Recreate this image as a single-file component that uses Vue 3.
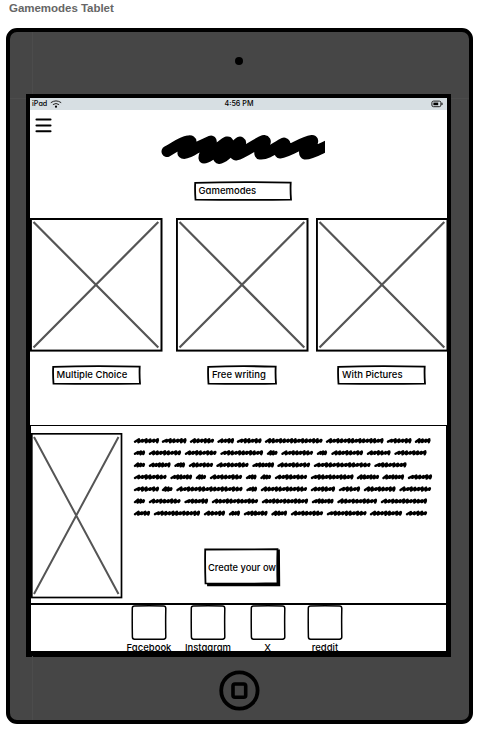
<script setup>
const modes = [
  { name: 'Multiple Choice', w: 89, cls: 'multiple' },
  { name: 'Free writing', w: 70, cls: 'writing' },
  { name: 'With Pictures', w: 89, cls: 'pictures' },
]

const socials = [
  { name: 'Facebook', cls: 'facebook' },
  { name: 'Instagram', cls: 'instagram' },
  { name: 'X', cls: 'x' },
  { name: 'reddit', cls: 'reddit' },
]

// Start and end of every scribbled word, one list per line.
const lines = [
  [[1, 26], [29, 53.5], [57, 81], [84.5, 101], [104, 128.5], [132, 189.5], [193, 250.5], [254, 278.5], [282, 297.5]],
  [[1, 12], [16, 48], [52, 83.5], [87.5, 130], [134, 144.5], [148.5, 180], [184, 194], [198.5, 230], [234, 257.5], [261.5, 293.5]],
  [[1, 12], [16, 37.5], [41.5, 52], [56, 80], [83.5, 115.5], [119.5, 141], [144.5, 177], [181, 237.5], [241.5, 273.5]],
  [[1, 33.5], [37.5, 59], [63, 73], [77, 109], [113, 123.5], [127.5, 138], [142, 174], [178, 220.5], [224, 246], [249.5, 271], [275, 299]],
  [[1, 26], [29, 39.5], [43.5, 109.5], [113.5, 124], [128, 174], [178, 202], [206, 227], [231, 262.5], [266.5, 298]],
  [[1, 12], [16, 47.5], [51.5, 75], [79, 125], [129, 175], [179, 200.5], [204.5, 244], [248, 294]],
  [[1, 17], [21, 67], [71, 92], [96, 107], [111, 134.5], [138.5, 154], [158, 190], [194, 233.5], [237, 269], [273, 294]],
]

const rises = [1.5, 0.9, 1.5, 1.3, 1.0, 1.6]

function wordPath([start, end], y, seed) {
  const count = Math.max(3, Math.round((end - start) / 3.9))
  const step = (end - start - 2.4) / count
  let x = start + 1
  let d = `M${x} ${y + 0.9}`
  for (let i = 0; i < count; i++) {
    const r = rises[(i + seed) % rises.length]
    d += `L${(x + step * 1.05).toFixed(1)} ${(y - r).toFixed(1)}`
    x += step
    d += `L${(x - step * 0.1).toFixed(1)} ${(y + r * 0.9).toFixed(1)}`
  }
  return d + `L${(end - 1.1).toFixed(1)} ${y - 0.4}`
}

const scribble = lines
  .map((words, row) => words.map((w, i) => wordPath(w, 4.8 + row * 12.08, row + i)).join(''))
  .join('')

function labelFrame(w) {
  return `M1.2 1.8Q${w * 0.45} .7 ${w - 1.3} 1.6Q${w - 1.7} 10 ${w - 1} 18.6Q${w / 2} 19.3 1.5 18.6Q.8 9 1.2 1.8Z`
}
</script>

<template>
  <main class="page">
    <h1 class="title">Gamemodes Tablet</h1>
    <div class="device">
      <i class="seam seam-top"></i>
      <i class="seam seam-bottom"></i>
      <i class="seam seam-left"></i>
      <i class="seam seam-right"></i>
      <span class="camera"></span>
      <div class="screen">
        <div class="status">
          <span class="carrier">iPad
            <svg width="12" height="8" viewBox="0 0 12 8">
              <path d="M.8 2.7Q6-.9 11.2 2.7M2.9 4.6Q6 2.4 9.1 4.6" fill="none" stroke="#222" stroke-width="1" />
              <circle cx="6" cy="6.7" r="1.1" />
            </svg>
          </span>
          <span class="clock">4:56 PM</span>
          <svg class="battery" width="12" height="8" viewBox="0 0 12 8">
            <rect x=".9" y="1.1" width="9" height="5.6" rx="1.6" fill="none" stroke="#222" />
            <rect x="2.4" y="2.6" width="4.8" height="2.6" />
            <path d="M11 2.8v2.2" stroke="#222" stroke-width="1.2" />
          </svg>
        </div>

        <header class="header">
          <svg class="menu" width="18" height="16" viewBox="0 0 18 16">
            <path d="M1.500 2.500h14M1.500 8.500h14M1.500 14.300h14" stroke="#000" stroke-width="2.100" stroke-linecap="round" />
          </svg>
          <svg class="logo" width="164" height="34" viewBox="0 0 164 34">
            <path
              d="M6 18.500C13 15 20 9 27 8C35 6 24 16 22 20C24 22 32 17 37 14L50 8C52 10 42 20 43 25C49 25 58 13 66 9C71 8 55 21 58 25.500C64 25 74 12 79 9C82 11 70 19 75 22C83 20 94 11 103 7.500C108 8 97 17 99 21C107 22 116 13 123 10C127 11 116 16 119 20C129 19 140 9 151 7.500C155 9 141 16 144 21C150 22 160 15 168 12"
              fill="none" stroke="#000" stroke-width="11" stroke-linecap="round" stroke-linejoin="round"
            />
          </svg>
        </header>

        <div class="label heading">
          <svg class="frame" width="98" height="20" viewBox="0 0 98 20"><path :d="labelFrame(98)" /></svg>
          <span>Gamemodes</span>
        </div>

        <section class="pictures-row">
          <svg v-for="m in modes" :key="m.name" class="picture" :class="m.cls" width="133" height="134" viewBox="0 0 133 134">
            <rect x=".9" y="1" width="130.600" height="131.600" fill="#fff" stroke="#000" stroke-width="2" />
            <path d="M3.500 4L128.300 129.500M128.300 4L3.500 129.500" stroke="#555" stroke-width="2.200" />
          </svg>
        </section>

        <section class="labels-row">
          <div v-for="m in modes" :key="m.name" class="label" :class="m.cls">
            <svg class="frame" :width="m.w" height="20" :viewBox="`0 0 ${m.w} 20`"><path :d="labelFrame(m.w)" /></svg>
            <span>{{ m.name }}</span>
          </div>
        </section>

        <section class="panel">
          <svg class="cover" width="92" height="166" viewBox="0 0 92 166">
            <rect x=".8" y=".8" width="89.700" height="163.700" fill="#fff" stroke="#000" stroke-width="1.700" />
            <path d="M3 4L87.500 161M87.500 4L3 161" stroke="#555" stroke-width="2" />
          </svg>
          <div class="details">
            <svg class="text-lines" width="300" height="82" viewBox="0 0 300 82">
              <path :d="scribble" fill="none" stroke="#000" stroke-width="2.400" stroke-linejoin="round" stroke-linecap="round" />
            </svg>
            <button class="create">
              <svg class="frame" width="78" height="40" viewBox="0 0 78 40">
                <path class="shadow" d="M3.500 4L75 2.500L75.300 37.300L4 37.300Z" />
                <path d="M1.200 1.500L73.500 1.200Q73 18 73.500 35.200Q38 36 1.500 35.300Q.9 18 1.200 1.500Z" />
              </svg>
              <span>Create your ow</span>
            </button>
          </div>
        </section>

        <footer class="footer">
          <div v-for="s in socials" :key="s.name" class="social" :class="s.cls">
            <svg width="36" height="36" viewBox="0 0 36 36">
              <path d="M3.500 1Q18 .7 32.500 1Q34.700 1 34.800 3.200Q34.500 18 34.800 32Q34.800 34 32.500 34.200Q18 34.500 3.500 34.200Q1.400 34.100 1.400 32Q1.100 18 1.300 3Q1.400 1 3.500 1Z" fill="#fff" stroke="#000" stroke-width="1.500" />
            </svg>
            <span>{{ s.name }}</span>
          </div>
        </footer>
      </div>
      <svg class="home" width="41" height="41" viewBox="0 0 41 41">
        <circle cx="20.400" cy="20.500" r="18.200" fill="none" stroke="#000" stroke-width="3.800" />
        <rect x="14" y="14" width="12.700" height="13.200" rx="2" fill="none" stroke="#000" stroke-width="3.600" />
      </svg>
    </div>
  </main>
</template>

<style>
body {
  margin: 0;
  background: #fff;
}
</style>

<style scoped>
.page {
  box-sizing: border-box;
  width: 484px;
  height: 729px;
  padding: 1px 0 0 6px;
  overflow: hidden;
  font-family: Inter, "Liberation Sans", sans-serif;
  font-feature-settings: "cv11";
  color: #000;
}
.title {
  height: 27px;
  margin: 0;
  padding-left: 3px;
  font: bold 11.5px/15px "Liberation Sans", Arial, sans-serif;
  letter-spacing: -0.03px;
  color: #666;
}
.device {
  position: relative;
  box-sizing: border-box;
  display: flex;
  flex-direction: column;
  width: 467px;
  height: 696px;
  padding-left: 16px;
  border: 4px solid #000;
  border-radius: 11px;
  background: #464646;
}
.seam {
  position: absolute;
  background: #4c4c4c;
}
.seam-top { left: 22px; top: 0; width: 1px; height: 62px; }
.seam-bottom { left: 22px; bottom: 0; width: 1px; height: 64px; }
.seam-left { left: 0; top: 66px; width: 16px; height: 1px; }
.seam-right { right: 0; top: 66px; width: 18px; height: 1px; }
.camera {
  width: 8px;
  height: 8px;
  margin: 25px 0 29px 209.400px;
  border-radius: 50%;
  background: #000;
}
.screen {
  box-sizing: border-box;
  display: flex;
  flex-direction: column;
  width: 425px;
  height: 563px;
  border: 4px solid #000;
  border-bottom-width: 5px;
  background: #fff;
}
.status {
  display: grid;
  grid-template-columns: 1fr auto 1fr;
  align-items: center;
  height: 12px;
  padding: 0 4px 0 2px;
  background: #d7dfe3;
  font-size: 7.2px;
  font-weight: 500;
  line-height: 12px;
}
.carrier {
  display: flex;
  align-items: center;
  gap: 3px;
}
.clock {
  padding-left: 3px;
}
.battery {
  justify-self: end;
}
.header {
  display: flex;
  align-items: flex-start;
  height: 71px;
}
.menu {
  margin: 7px 0 0 5px;
}
.logo {
  margin: 23px 0 0 108px;
  overflow: hidden;
}
.label {
  position: relative;
  box-sizing: border-box;
  height: 20px;
  padding-left: 5px;
  font-size: 9.5px;
  font-weight: 450;
  line-height: 19px;
  white-space: nowrap;
}
.label span {
  position: relative;
}
.frame {
  position: absolute;
  left: 0;
  top: 0;
  fill: #fff;
  stroke: #000;
  stroke-width: 1.8;
}
.heading {
  width: 98px;
  margin-left: 163.500px;
}
.pictures-row {
  display: flex;
  height: 134px;
  margin-top: 17px;
}
.picture {
  position: relative;
  flex: none;
}
.picture.writing {
  margin-left: 13px;
}
.picture.pictures {
  margin-left: 6.500px;
}
.labels-row {
  display: flex;
  height: 20px;
  margin-top: 13px;
  padding-left: 21.500px;
}
.label.multiple { width: 89px; }
.label.writing { width: 70px; margin-left: 66.500px; }
.label.pictures { width: 89px; margin-left: 60px; }
.panel {
  box-sizing: border-box;
  display: flex;
  height: 178px;
  margin-top: 40px;
  padding: 6px 0 0;
  border: solid #000;
  border-width: 1.500px 1px 0;
}
.cover {
  flex: none;
  margin-top: 1px;
}
.details {
  display: flex;
  flex-direction: column;
  margin-left: 10px;
}
.text-lines {
  margin-top: 4px;
}
.create {
  position: relative;
  width: 78px;
  height: 40px;
  margin: 30px 0 0 71px;
  padding: 0 0 1px 4px;
  border: 0;
  background: none;
  font: 450 9.3px/38px Inter, sans-serif;
  font-feature-settings: "cv11";
  text-align: left;
  white-space: nowrap;
  color: #000;
}
.create span {
  position: relative;
}
.shadow {
  fill: #000;
}
.footer {
  box-sizing: border-box;
  display: flex;
  height: 49px;
  border: solid #000;
  border-width: 2px 1px 1px;
  overflow: hidden;
}
.social {
  display: flex;
  flex: none;
  flex-direction: column;
  align-items: center;
  width: 36px;
  font-size: 9.500px;
  font-weight: 450;
  line-height: 14px;
  white-space: nowrap;
}
.social svg {
  flex: none;
}
.facebook { margin-left: 100px; }
.instagram { margin-left: 23px; }
.x { margin-left: 23.500px; }
.reddit { margin-left: 21.500px; }
.home {
  margin: 13px 0 0 193px;
}
</style>
